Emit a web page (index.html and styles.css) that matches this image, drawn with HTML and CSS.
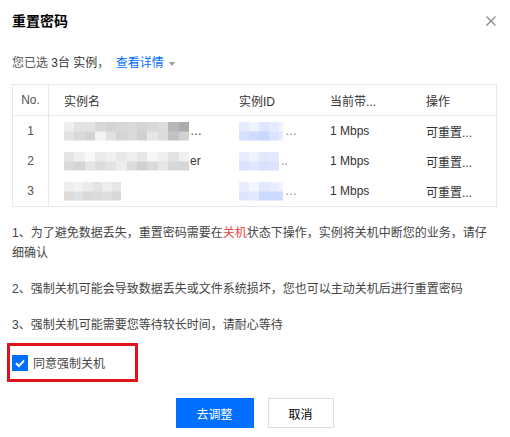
FILE: index.html
```html
<!DOCTYPE html>
<html lang="zh-CN">
<head>
    <meta charset="UTF-8">
    <meta name="viewport" content="width=device-width, initial-scale=1.0">
    <title>重置密码</title>
    <link rel="stylesheet" href="styles.css">
</head>
<body>
    <div class="dialog">
        <div class="dialog-header">
            <h2 class="dialog-title">重置密码</h2>
            <svg class="close" width="10" height="10" viewBox="0 0 10 10">
                <path d="M0.5 0.5 L9.5 9.5 M9.5 0.5 L0.5 9.5" stroke="#8a8a8a" stroke-width="1.3" fill="none"/>
            </svg>
        </div>

        <div class="summary">
            您已选 <span class="count">3台 实例</span>，
            <a class="link">查看详情</a><span class="caret"></span>
        </div>

        <div class="table">
            <div class="row head">
                <div class="cell no">No.</div>
                <div class="cell">实例名</div>
                <div class="cell">实例ID</div>
                <div class="cell">当前带...</div>
                <div class="cell">操作</div>
            </div>
            <div class="row">
                <div class="cell no">1</div>
                <div class="cell"><span class="mosaic name-1"></span><span class="tail">…</span></div>
                <div class="cell"><span class="mosaic id-1"></span><span class="dots">…</span></div>
                <div class="cell">1 Mbps</div>
                <div class="cell">可重置...</div>
            </div>
            <div class="row">
                <div class="cell no">2</div>
                <div class="cell"><span class="mosaic name-2"></span><span class="tail">er</span></div>
                <div class="cell"><span class="mosaic id-2"></span><span class="dots">..</span></div>
                <div class="cell">1 Mbps</div>
                <div class="cell">可重置...</div>
            </div>
            <div class="row">
                <div class="cell no">3</div>
                <div class="cell"><span class="mosaic name-3"></span></div>
                <div class="cell"><span class="mosaic id-3"></span><span class="dots">…</span></div>
                <div class="cell">1 Mbps</div>
                <div class="cell">可重置...</div>
            </div>
        </div>

        <div class="notes">
            <p>1、为了避免数据丢失，重置密码需要在<span class="danger">关机</span>状态下操作，实例将关机中断您的业务，请仔细确认</p>
            <p>2、强制关机可能会导致数据丢失或文件系统损坏，您也可以主动关机后进行重置密码</p>
            <p>3、强制关机可能需要您等待较长时间，请耐心等待</p>
        </div>

        <div class="agree">
            <span class="checkbox">
                <svg width="16" height="16" viewBox="0 0 16 16">
                    <path d="M4 8.3 L6.9 11 L12 5.6" stroke="#fff" stroke-width="2" fill="none"/>
                </svg>
            </span>
            <span>同意强制关机</span>
        </div>

        <div class="footer">
            <button class="btn primary">去调整</button>
            <button class="btn">取消</button>
        </div>
    </div>
</body>
</html>
```

FILE: styles.css
```css
body {
    margin: 0;
    background: #fff;
    font-family: "Liberation Sans", "Noto Sans CJK SC", sans-serif;
    font-size: 12px;
    color: #444;
}
.dialog {
    width: 485px;
    padding: 0 13px 0 12px;
}
.dialog-header {
    display: flex;
    justify-content: space-between;
    align-items: center;
    margin-top: 11px;
    height: 20px;
}
.dialog-title {
    margin: 0;
    font-size: 14px;
    font-weight: bold;
    line-height: 20px;
    color: #000;
}
.close {
    margin-right: 1px;
}
.summary {
    margin-top: 22px;
    line-height: 20px;
    color: #555;
}
.count {
    color: #333;
}
.link {
    color: #006eff;
    margin-left: 3px;
}
.caret {
    display: inline-block;
    margin-left: 5px;
    border-top: 4px solid #999;
    border-left: 3.5px solid transparent;
    border-right: 3.5px solid transparent;
    vertical-align: middle;
}
.table {
    margin-top: 11px;
    border: 1px solid #e5e8ee;
}
.row {
    display: grid;
    grid-template-columns: 36px 175px 91px 96px auto;
    height: 30px;
}
.row.head {
    height: 30px;
    border-bottom: 1px solid #e5e8ee;
}
.cell {
    display: flex;
    align-items: center;
    padding-left: 15px;
    color: #333;
    white-space: nowrap;
    overflow: hidden;
}
.cell.no {
    justify-content: center;
    padding-left: 0;
    border-right: 1px solid #e5e8ee;
    color: #555;
}
.mosaic {
    display: inline-block;
    height: 19px;
    background-repeat: no-repeat;
    background-size: 100% 50%;
    background-position: top, bottom;
}
.name-1 {
    width: 125px;
    background-image:
        linear-gradient(to right, #eeeef0 0 10px, #e3e3e3 10px 21px, #e2e2e4 21px 31px, #d8d8d8 31px 42px, #d4d4d6 42px 52px, #d8d8d8 52px 63px, #d9d9d9 63px 73px, #d4d4d6 73px 83px, #d9d9d9 83px 94px, #dddddd 94px 104px, #b6b8bb 104px 115px, #aeabab 115px),
        linear-gradient(to right, #e3e3e5 0 10px, #dcdad9 10px 21px, #d3d3d5 21px 31px, #f4f4f4 31px 42px, #e1e1e1 42px 52px, #d4d4d6 52px 63px, #dadada 63px 73px, #d1d1d3 73px 83px, #e6e6e6 83px 94px, #dcdcdc 94px 104px, #c2c2c4 104px 115px, #d3d1d1 115px);
}
.name-2 {
    width: 125px;
    background-image:
        linear-gradient(to right, #e6e6e8 0 10px, #eef0f0 10px 21px, #f8f8f8 21px 31px, #eaeaea 31px 42px, #f0f0f0 42px 52px, #e8e8e8 52px 63px, #eeeeee 63px 73px, #e6e6e6 73px 83px, #f6f6f8 83px 94px, #eeeeee 94px 104px, #e4e4e4 104px 115px, #f0f0f0 115px),
        linear-gradient(to right, #dadadc 0 10px, #d5d5d7 10px 21px, #e4e4e4 21px 31px, #dddbdb 31px 42px, #e2e2e4 42px 52px, #ededed 52px 63px, #dcdcdc 63px 73px, #d0d0d2 73px 83px, #dcdad8 83px 94px, #e6e6e6 94px 104px, #d8d8d8 104px 115px, #d6d6d6 115px);
}
.name-3 {
    width: 57px;
    background-image:
        linear-gradient(to right, #eeeeee 0 10px, #f2f2f2 10px 19px, #ebebeb 19px 29px, #e3e3e3 29px 38px, #ededed 38px 48px, #e6e6e6 48px),
        linear-gradient(to right, #dedbd8 0 10px, #dfe2e6 10px 19px, #d9d9d9 19px 29px, #dbdbdd 29px 38px, #dedede 38px 48px, #d9d9d9 48px);
}
.id-1 {
    width: 44px;
    background-image:
        linear-gradient(to right, #e6ecff 0 10px, #eef3ff 10px 20px, #dce6ff 20px 30px, #e6ebff 30px 40px, #eef2ff 40px),
        linear-gradient(to right, #d6e1ff 0 10px, #d0dcff 10px 20px, #c9d8ff 20px 30px, #dae3ff 30px 40px, #e4eaff 40px);
}
.id-2 {
    width: 40px;
    background-image:
        linear-gradient(to right, #e6ecff 0 10px, #f0f4ff 10px 20px, #e2e9ff 20px 30px, #e4eaff 30px),
        linear-gradient(to right, #dae3ff 0 10px, #e0e8ff 10px 20px, #d8e2ff 20px 30px, #dbe4ff 30px);
}
.id-3 {
    width: 44px;
    background-image:
        linear-gradient(to right, #e8eeff 0 10px, #f4f7ff 10px 20px, #e2e9ff 20px 30px, #e8eeff 30px 40px, #f0f4ff 40px),
        linear-gradient(to right, #dde6ff 0 10px, #e2e9ff 10px 20px, #cbdaff 20px 30px, #cbdaff 30px 40px, #cfdcff 40px);
}
.tail {
    margin-left: 1px;
    color: #333;
}
.dots {
    margin-left: 2px;
    color: #888;
}
.notes {
    margin-top: 16px;
}
.notes p {
    margin: 0 0 16px;
    line-height: 20px;
    color: #444;
}
.notes p:last-child {
    margin-bottom: 0;
}
.danger {
    color: #e54545;
}
.agree {
    display: flex;
    align-items: center;
    gap: 5px;
    width: 123px;
    height: 33px;
    margin: 8px 0 0 -5px;
    padding-left: 2px;
    border: 3px solid #e0131d;
    color: #444;
}
.checkbox {
    display: flex;
    width: 16px;
    height: 16px;
    background: #006eff;
}
.footer {
    display: flex;
    justify-content: center;
    gap: 14px;
    margin-top: 16px;
}
.btn {
    height: 30px;
    min-width: 66px;
    padding: 0 18px;
    border: 1px solid #dddddd;
    background: #fff;
    color: #000;
    font-family: inherit;
    font-size: 12px;
}
.btn.primary {
    width: 78px;
    background: #006eff;
    border-color: #006eff;
    color: #fff;
}
```
